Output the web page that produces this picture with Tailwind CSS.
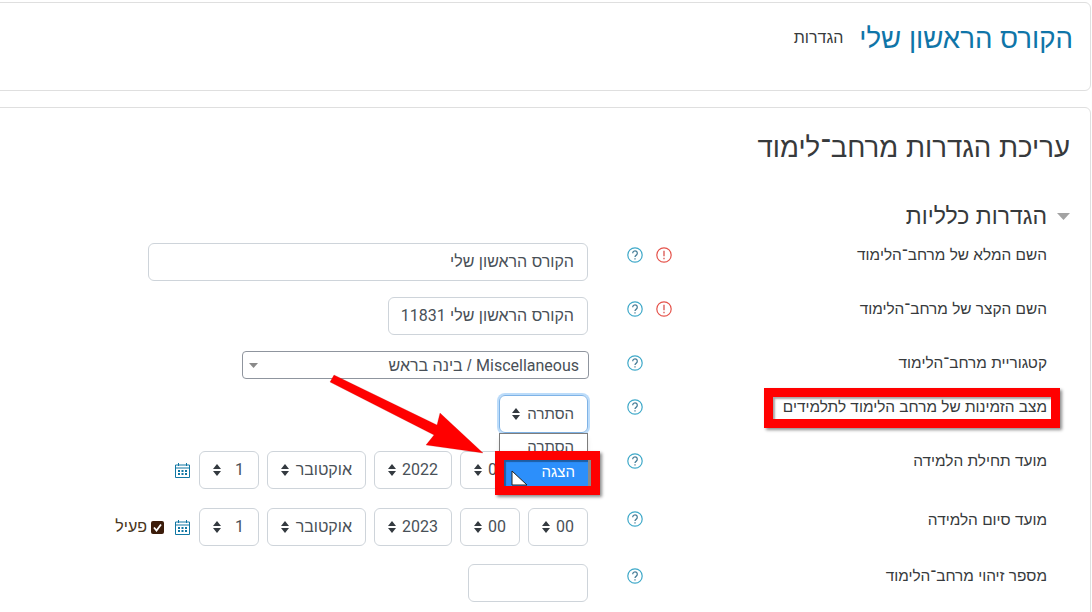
<!DOCTYPE html>
<html lang="he" dir="rtl">
<head>
  <meta charset="utf-8">
  <title>עריכת הגדרות מרחב־לימוד</title>
  <script src="https://cdn.jsdelivr.net/npm/@tailwindcss/browser@4"></script>
</head>
<body class="relative h-[612px] w-[1092px] overflow-hidden bg-white pt-[2px] font-['Liberation_Sans',sans-serif] text-[#373a3c]">

  <!-- Course header -->
  <div class="mr-px ml-[-10px] flex h-[89px] items-start gap-4 rounded-md border border-[#dfdfdf] pt-[20px] pr-[17px]">
    <h1 class="text-[27.6px] leading-[32px] text-[#0f75a8]">הקורס הראשון שלי</h1>
    <span class="text-[16px] leading-[30px] text-[#373a3c]">הגדרות</span>
  </div>

  <!-- Settings card -->
  <div class="mt-[16px] mr-px ml-[-10px] h-[520px] rounded-md border border-[#dfdfdf] pt-[21px] pr-[20px]">
    <h2 class="text-[27.6px] leading-[38px] text-[#373a3c]">עריכת הגדרות מרחב־לימוד</h2>

    <div class="mt-[31px] flex h-[36px] items-center gap-[10px]">
      <svg class="h-[7px] w-[13px]" viewBox="0 0 13 7"><path d="M0 0h13L6.5 7z" fill="#a3a3a3"/></svg>
      <h3 class="text-[23px] leading-[30px] text-[#373a3c]">הגדרות כלליות</h3>
    </div>

    <!-- Rows -->
    <div class="mt-[9px] pr-[23px]">
      <div class="mb-4 flex items-start">
        <label class="w-[375px] text-[15.4px] leading-6">השם המלא של מרחב־הלימוד</label>
        <div class="flex h-6 w-[84px] items-center gap-[13px]">
          <svg class="h-4 w-4 shrink-0" viewBox="0 0 16 16"><circle cx="8" cy="8" r="7.2" fill="none" stroke="#e5534b" stroke-width="1.2"/><path d="M8 3.8v5.4M8 10.8v1.4" stroke="#d9534f" stroke-width="1.3"/></svg>
          <svg class="h-4 w-4 shrink-0" viewBox="0 0 16 16"><circle cx="8" cy="8" r="7.2" fill="none" stroke="#3fa9c9" stroke-width="1.2"/><path d="M5.7 6.2a2.3 2.3 0 1 1 3.6 1.9C8.4 8.7 8 9.1 8 10M8 11.2v1.3" fill="none" stroke="#4a7f99" stroke-width="1.3"/></svg>
        </div>
        <div class="flex h-[38px] w-[440px] items-center rounded-md border border-[#ced4da] px-[13px] text-[16px] text-[#495057]">הקורס הראשון שלי</div>
      </div>

      <div class="mb-4 flex items-start">
        <label class="w-[375px] text-[15.4px] leading-6">השם הקצר של מרחב־הלימוד</label>
        <div class="flex h-6 w-[84px] items-center gap-[13px]">
          <svg class="h-4 w-4 shrink-0" viewBox="0 0 16 16"><circle cx="8" cy="8" r="7.2" fill="none" stroke="#e5534b" stroke-width="1.2"/><path d="M8 3.8v5.4M8 10.8v1.4" stroke="#d9534f" stroke-width="1.3"/></svg>
          <svg class="h-4 w-4 shrink-0" viewBox="0 0 16 16"><circle cx="8" cy="8" r="7.2" fill="none" stroke="#3fa9c9" stroke-width="1.2"/><path d="M5.7 6.2a2.3 2.3 0 1 1 3.6 1.9C8.4 8.7 8 9.1 8 10M8 11.2v1.3" fill="none" stroke="#4a7f99" stroke-width="1.3"/></svg>
        </div>
        <div class="flex h-[38px] w-[200px] items-center rounded-md border border-[#ced4da] pr-[13px] text-[16px] whitespace-nowrap text-[#495057]"><span>הקורס הראשון שלי <span class="font-['Roboto',sans-serif]">11831</span></span></div>
      </div>

      <div class="mb-4 flex items-start">
        <label class="w-[375px] text-[15.4px] leading-[23px]">קטגוריית מרחב־הלימוד</label>
        <div class="flex h-6 w-[84px] items-center pr-[29px]">
          <svg class="h-4 w-4 shrink-0" viewBox="0 0 16 16"><circle cx="8" cy="8" r="7.2" fill="none" stroke="#3fa9c9" stroke-width="1.2"/><path d="M5.7 6.2a2.3 2.3 0 1 1 3.6 1.9C8.4 8.7 8 9.1 8 10M8 11.2v1.3" fill="none" stroke="#4a7f99" stroke-width="1.3"/></svg>
        </div>
        <div class="-mr-px flex h-[28px] w-[347px] items-center justify-between rounded-[4px] border border-[#8f959e] pt-px pr-[9px] pl-[6px] text-[16px] text-[#495057]">
          <span><span class="font-['Roboto',sans-serif]">Miscellaneous</span> / בינה בראש</span>
          <svg class="h-[5px] w-[9px]" viewBox="0 0 9 5"><path d="M0 0h9L4.500 5z" fill="#8a8a8a"/></svg>
        </div>
      </div>

      <div class="mb-[18px] flex items-start">
        <label class="w-[375px] text-[15.4px] leading-[23px]">מצב הזמינות של מרחב הלימוד לתלמידים</label>
        <div class="flex h-6 w-[84px] items-center pr-[29px]">
          <svg class="h-4 w-4 shrink-0" viewBox="0 0 16 16"><circle cx="8" cy="8" r="7.2" fill="none" stroke="#3fa9c9" stroke-width="1.2"/><path d="M5.7 6.2a2.3 2.3 0 1 1 3.6 1.9C8.4 8.7 8 9.1 8 10M8 11.2v1.3" fill="none" stroke="#4a7f99" stroke-width="1.3"/></svg>
        </div>
        <div class="flex h-[38px] w-[89px] items-center justify-between rounded-md border border-[#7fb3e6] pr-[13px] pl-[12px] text-[15px] text-[#495057] shadow-[0_0_0_2px_#bcdcfa]">
          <span>הסתרה</span>
          <svg class="h-3 w-2" viewBox="0 0 8 12"><path d="M4 0l4 5H0zM4 12L0 7h8z" fill="#343a40"/></svg>
        </div>
      </div>

      <div class="mb-[19px] flex items-start">
        <label class="w-[375px] text-[15.4px] leading-5">מועד תחילת הלמידה</label>
        <div class="flex h-5 w-[84px] items-center pr-[29px]">
          <svg class="h-4 w-4 shrink-0" viewBox="0 0 16 16"><circle cx="8" cy="8" r="7.2" fill="none" stroke="#3fa9c9" stroke-width="1.2"/><path d="M5.7 6.2a2.3 2.3 0 1 1 3.6 1.9C8.4 8.7 8 9.1 8 10M8 11.2v1.3" fill="none" stroke="#4a7f99" stroke-width="1.3"/></svg>
        </div>
        <div class="flex items-center gap-2">
          <!-- this select sits under the open dropdown -->
          <div class="h-[38px] w-[60px] rounded-md border border-[#ced4da]"></div>
          <div class="flex h-[38px] w-[60px] items-center justify-between rounded-md border border-[#ced4da] px-[13px] font-['Roboto',sans-serif] text-[16px] text-[#495057]"><span>00</span><svg class="h-3 w-2" viewBox="0 0 8 12"><path d="M4 0l4 5H0zM4 12L0 7h8z" fill="#343a40"/></svg></div>
          <div class="flex h-[38px] w-[78px] items-center justify-between rounded-md border border-[#ced4da] px-[13px] font-['Roboto',sans-serif] text-[16px] text-[#495057]"><span>2022</span><svg class="h-3 w-2" viewBox="0 0 8 12"><path d="M4 0l4 5H0zM4 12L0 7h8z" fill="#343a40"/></svg></div>
          <div class="flex h-[38px] w-[99px] items-center justify-between rounded-md border border-[#ced4da] px-[13px] text-[16px] text-[#495057]"><span>אוקטובר</span><svg class="h-3 w-2" viewBox="0 0 8 12"><path d="M4 0l4 5H0zM4 12L0 7h8z" fill="#343a40"/></svg></div>
          <div class="flex h-[38px] w-[60px] items-center justify-between rounded-md border border-[#ced4da] pr-[14px] pl-[13px] font-['Roboto',sans-serif] text-[16px] text-[#495057]"><span>1</span><svg class="h-3 w-2" viewBox="0 0 8 12"><path d="M4 0l4 5H0zM4 12L0 7h8z" fill="#343a40"/></svg></div>
          <svg class="mr-[1px] h-4 w-[15px]" viewBox="0 0 15 16"><path d="M.5 3h14v12.500H.5zM.5 6h14" fill="none" stroke="#1177a3"/><path d="M3.500 1v3M11.500 1v3" stroke="#1177a3"/><path d="M3 8h2v2H3zM6.500 8h2v2h-2zM10 8h2v2h-2zM3 11h2v2H3zM6.500 11h2v2h-2zM10 11h2v2h-2z" fill="#1177a3"/></svg>
        </div>
      </div>

      <div class="mb-[18px] flex items-start">
        <label class="w-[375px] text-[15.4px] leading-[23px]">מועד סיום הלמידה</label>
        <div class="flex h-[21px] w-[84px] items-center pr-[29px]">
          <svg class="h-4 w-4 shrink-0" viewBox="0 0 16 16"><circle cx="8" cy="8" r="7.2" fill="none" stroke="#3fa9c9" stroke-width="1.2"/><path d="M5.7 6.2a2.3 2.3 0 1 1 3.6 1.9C8.4 8.7 8 9.1 8 10M8 11.2v1.3" fill="none" stroke="#4a7f99" stroke-width="1.3"/></svg>
        </div>
        <div class="flex items-center gap-2">
          <div class="flex h-[38px] w-[60px] items-center justify-between rounded-md border border-[#ced4da] px-[13px] font-['Roboto',sans-serif] text-[16px] text-[#495057]"><span>00</span><svg class="h-3 w-2" viewBox="0 0 8 12"><path d="M4 0l4 5H0zM4 12L0 7h8z" fill="#343a40"/></svg></div>
          <div class="flex h-[38px] w-[60px] items-center justify-between rounded-md border border-[#ced4da] px-[13px] font-['Roboto',sans-serif] text-[16px] text-[#495057]"><span>00</span><svg class="h-3 w-2" viewBox="0 0 8 12"><path d="M4 0l4 5H0zM4 12L0 7h8z" fill="#343a40"/></svg></div>
          <div class="flex h-[38px] w-[78px] items-center justify-between rounded-md border border-[#ced4da] px-[13px] font-['Roboto',sans-serif] text-[16px] text-[#495057]"><span>2023</span><svg class="h-3 w-2" viewBox="0 0 8 12"><path d="M4 0l4 5H0zM4 12L0 7h8z" fill="#343a40"/></svg></div>
          <div class="flex h-[38px] w-[99px] items-center justify-between rounded-md border border-[#ced4da] px-[13px] text-[16px] text-[#495057]"><span>אוקטובר</span><svg class="h-3 w-2" viewBox="0 0 8 12"><path d="M4 0l4 5H0zM4 12L0 7h8z" fill="#343a40"/></svg></div>
          <div class="flex h-[38px] w-[60px] items-center justify-between rounded-md border border-[#ced4da] pr-[14px] pl-[13px] font-['Roboto',sans-serif] text-[16px] text-[#495057]"><span>1</span><svg class="h-3 w-2" viewBox="0 0 8 12"><path d="M4 0l4 5H0zM4 12L0 7h8z" fill="#343a40"/></svg></div>
          <svg class="mr-[1px] h-4 w-[15px]" viewBox="0 0 15 16"><path d="M.5 3h14v12.500H.5zM.5 6h14" fill="none" stroke="#1177a3"/><path d="M3.500 1v3M11.500 1v3" stroke="#1177a3"/><path d="M3 8h2v2H3zM6.500 8h2v2h-2zM10 8h2v2h-2zM3 11h2v2H3zM6.500 11h2v2h-2zM10 11h2v2h-2z" fill="#1177a3"/></svg>
          <span class="mr-[3px] flex h-[13px] w-[13px] items-center justify-center rounded-[2px] bg-[#3b1c0a]">
            <svg class="h-[9px] w-[9px]" viewBox="0 0 9 9"><path d="M1 4.500l2.500 3L8 1.500" fill="none" stroke="#fff" stroke-width="1.800"/></svg>
          </span>
          <span class="-mr-[4px] text-[16px] text-[#4a3520]">פעיל</span>
        </div>
      </div>

      <div class="flex items-start">
        <label class="w-[375px] text-[15.4px] leading-6">מספר זיהוי מרחב־הלימוד</label>
        <div class="flex h-6 w-[84px] items-center pr-[29px]">
          <svg class="h-4 w-4 shrink-0" viewBox="0 0 16 16"><circle cx="8" cy="8" r="7.2" fill="none" stroke="#3fa9c9" stroke-width="1.2"/><path d="M5.7 6.2a2.3 2.3 0 1 1 3.6 1.9C8.4 8.7 8 9.1 8 10M8 11.2v1.3" fill="none" stroke="#4a7f99" stroke-width="1.3"/></svg>
        </div>
        <div class="h-[38px] w-[120px] rounded-md border border-[#ced4da]"></div>
      </div>
    </div>
  </div>

  <!-- Open dropdown -->
  <div class="absolute top-[433px] left-[499px] h-[56px] w-[89px] border border-[#7d7d7d] bg-white pt-px text-[15px] leading-[24px] text-[#495057] shadow-md">
    <div class="pr-[13px]">הסתרה</div>
  </div>

  <!-- Annotation: red frames -->
  <div class="absolute top-[388px] left-[764px] h-[40px] w-[296px] border-[9px] border-[#ff0000] shadow-[2px_2px_3px_rgba(0,0,0,0.45),inset_2px_2px_2px_rgba(0,0,0,0.35)]"></div>
  <div class="absolute top-[451px] left-[495px] h-[44px] w-[105px] border-[9px] border-[#ff0000] bg-white shadow-[2px_2px_3px_rgba(0,0,0,0.45)]">
    <div class="h-[26px] w-[87px] border-r-[3px] border-r-[#8a8a8a] bg-[#2c8ffb] pr-[13px] text-[15px] leading-[24px] font-medium text-white shadow-[inset_2px_2px_1px_rgba(0,0,0,0.35)]">הצגה</div>
  </div>

  <!-- Annotation: arrow and cursor -->
  <svg class="absolute top-0 left-0 h-[612px] w-[1092px]" viewBox="0 0 1092 612">
    <path d="M334 375L437 425L440 413L483 453L426 445L434 435L330 382z" fill="#ff0000" stroke="#b30000" stroke-opacity=".2"/>
    <path d="M512 471V485H527z" fill="#fff" stroke="#222" stroke-width="1"/>
  </svg>
</body>
</html>
